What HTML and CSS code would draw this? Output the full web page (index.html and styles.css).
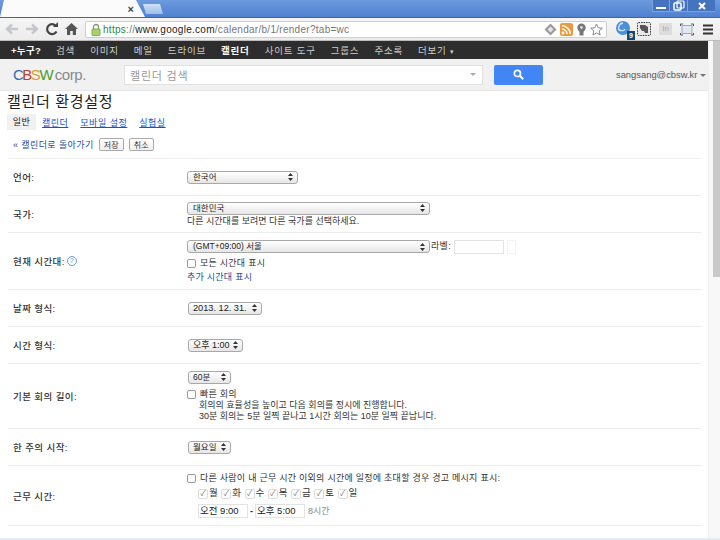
FILE: index.html
```html
<!DOCTYPE html>
<html lang="ko">
<head>
    <meta charset="utf-8">
    <title>캘린더 환경설정</title>
    <link rel="stylesheet" href="styles.css">
</head>
<body>
    <!-- Browser tabs -->
    <div class="tabstrip">
        <div class="tab"><span class="tab-close">×</span></div>
        <div class="new-tab"></div>
        <div class="win-controls">
            <span class="win-btn win-min"><svg width="14" height="10" viewBox="0 0 14 10"><path d="M2 7h10" stroke="#fff" stroke-width="2"/></svg></span>
            <span class="win-btn win-max"><svg width="14" height="11" viewBox="0 0 14 11"><rect x="2" y="3" width="7" height="7" rx="1" fill="none" stroke="#fff" stroke-width="1.5"/><rect x="5" y="1" width="7" height="7" rx="1" fill="none" stroke="#fff" stroke-width="1.2"/></svg></span>
            <span class="win-btn win-close"><svg width="14" height="10" viewBox="0 0 14 10"><path d="M4 2l6 6M10 2l-6 6" stroke="#fff" stroke-width="2"/></svg></span>
        </div>
    </div>

    <!-- Browser toolbar -->
    <div class="toolbar">
        <svg class="tool" width="14" height="14" viewBox="0 0 14 14"><path d="M13 7H3M7 2.5L2 7l5 4.5" fill="none" stroke="#c4c8cc" stroke-width="2.4"/></svg>
        <svg class="tool" width="14" height="14" viewBox="0 0 14 14"><path d="M1 7h10M7 2.5L12 7l-5 4.5" fill="none" stroke="#c4c8cc" stroke-width="2.4"/></svg>
        <svg class="tool" width="14" height="14" viewBox="0 0 14 14"><path d="M11.5 9.5A5 5 0 1 1 11 4" fill="none" stroke="#444" stroke-width="2.2"/><path d="M8 5h5V0z" fill="#444"/></svg>
        <svg class="tool" width="13" height="14" viewBox="0 0 13 14"><path d="M6.5 1L0 7h2v6h3.2V9h2.6v4H11V7h2z" fill="#555"/></svg>
        <div class="omnibox">
            <svg class="lock" width="10" height="13" viewBox="0 0 10 13"><path d="M2.5 6V4a2.5 2.5 0 0 1 5 0v2" fill="none" stroke="#8a9a70" stroke-width="1.3"/><rect x="1" y="6" width="8" height="6.5" rx="1" fill="#a4d46a" stroke="#6f9c3c" stroke-width=".8"/></svg>
            <span class="url"><span class="url-https">https</span><span class="url-dim">://</span><span class="url-host">www.google.com</span><span class="url-dim">/calendar/b/1/render?tab=wc</span></span>
            <span class="omni-icons">
                <svg width="13" height="13" viewBox="0 0 13 13"><path d="M6.5 0.5l6 6-6 6-6-6z" fill="#9a9a9a"/><path d="M6.5 3.5l3 3-3 3-3-3z" fill="#e4e4e4"/></svg>
                <svg width="13" height="13" viewBox="0 0 13 13"><rect width="13" height="13" rx="2" fill="#ee9a3c"/><circle cx="3" cy="10" r="1.4" fill="#fff"/><path d="M2 6a5 5 0 0 1 5 5M2 2.8A8.2 8.2 0 0 1 10.2 11" fill="none" stroke="#fff" stroke-width="1.5"/></svg>
                <svg width="11" height="13" viewBox="0 0 11 13"><circle cx="5.5" cy="4.8" r="4.2" fill="#777"/><rect x="3.5" y="8" width="4" height="4.5" fill="#777"/><circle cx="5.5" cy="4.5" r="1.4" fill="#ddd"/></svg>
                <svg width="13" height="13" viewBox="0 0 13 13"><path d="M6.5 1l1.7 3.8 4.1.4-3.1 2.7.9 4.1-3.6-2.1-3.6 2.1.9-4.1L.7 5.2l4.1-.4z" fill="#fff" stroke="#888"/></svg>
            </span>
        </div>
        <div class="extensions">
            <span class="ext-globe"><svg width="18" height="18" viewBox="0 0 18 18"><circle cx="8" cy="8" r="7" fill="#4d8fd6"/><path d="M8 3a5 5 0 0 0-4 7c2 1 5 1 6-1" fill="none" stroke="#d5e7f7" stroke-width="1.4"/></svg><span class="ext-badge">9</span></span>
            <svg width="14" height="14" viewBox="0 0 14 14"><rect x=".5" y=".5" width="13" height="13" rx="1" fill="#e8e8e8" stroke="#333" stroke-dasharray="1.5 1"/><path d="M3 3h5l3 2v6H8l-1-2H5L3 6z" fill="#555"/></svg>
            <span class="ext-in">In</span>
            <svg width="14" height="13" viewBox="0 0 14 13"><rect x="2" y="2.5" width="10" height="8" fill="#dfe9f4" stroke="#8a9cae" stroke-width=".8"/><path d="M.5 3V1h2.5M11 1h2.5v2M.5 10v2h2.5M11 12h2.5v-2" fill="none" stroke="#556"/></svg>
            <svg class="ext-menu" width="10" height="11" viewBox="0 0 10 11"><path d="M0 1.5h10M0 5.5h10M0 9.5h10" stroke="#333" stroke-width="2"/></svg>
        </div>
    </div>

    <div class="viewport">
        <div class="page">
            <!-- Google bar -->
            <nav class="gbar">
                <a class="gbar-plus">+누구?</a>
                <a>검색</a>
                <a>이미지</a>
                <a>메일</a>
                <a>드라이브</a>
                <a class="gbar-on">캘린더</a>
                <a>사이트 도구</a>
                <a>그룹스</a>
                <a>주소록</a>
                <a>더보기 <span class="gbar-caret">▾</span></a>
            </nav>

            <header class="masthead">
                <div class="logo"><span class="l-b">C</span><span class="l-b2">B</span><span class="l-o">S</span><span class="l-g">W</span> <span class="l-corp">corp.</span></div>
                <div class="search-box">
                    <span>캘린더 검색</span>
                    <span class="search-caret"></span>
                </div>
                <div class="search-btn">
                    <svg width="11" height="11" viewBox="0 0 11 11"><circle cx="4.4" cy="4.4" r="3.1" fill="none" stroke="#fff" stroke-width="1.7"/><path d="M6.8 6.8L10.2 10.2" stroke="#fff" stroke-width="2"/></svg>
                </div>
                <div class="account">sangsang@cbsw.kr <span class="account-caret"></span></div>
            </header>

            <h1 class="title">캘린더 환경설정</h1>

            <div class="tabs">
                <span class="tabs-on">일반</span>
                <a>캘린더</a>
                <a>모바일 설정</a>
                <a>실험실</a>
            </div>

            <div class="actions">
                <a class="back">« 캘린더로 돌아가기</a>
                <button class="btn">저장</button>
                <button class="btn">취소</button>
            </div>

            <!-- Settings rows -->
            <div class="row row-37">
                <div class="row-label">언어:</div>
                <div class="row-field">
                    <div class="select sel-lang"><span>한국어</span><svg class="updown" width="5" height="8" viewBox="0 0 5 8"><path d="M2.5 0L5 3H0zM2.5 8L0 5h5z"/></svg></div>
                </div>
            </div>

            <div class="row row-37">
                <div class="row-label">국가:</div>
                <div class="row-field">
                    <div class="select sel-wide"><span>대한민국</span><svg class="updown" width="5" height="8" viewBox="0 0 5 8"><path d="M2.5 0L5 3H0zM2.5 8L0 5h5z"/></svg></div>
                    <div class="note">다른 시간대를 보려면 다른 국가를 선택하세요.</div>
                </div>
            </div>

            <div class="row row-tz">
                <div class="row-label">현재 시간대:<span class="help">?</span></div>
                <div class="row-field">
                    <div class="tz-line">
                        <div class="select sel-wide"><span>(GMT+09:00) 서울</span><svg class="updown" width="5" height="8" viewBox="0 0 5 8"><path d="M2.5 0L5 3H0zM2.5 8L0 5h5z"/></svg></div>
                        <span class="tz-label">라벨:</span>
                        <span class="text-input tz-input"></span>
                        <span class="tz-stub"></span>
                    </div>
                    <label class="check check-tz"><span class="box"></span>모든 시간대 표시</label>
                    <a class="plain-link">추가 시간대 표시</a>
                </div>
            </div>

            <div class="row row-37">
                <div class="row-label">날짜 형식:</div>
                <div class="row-field">
                    <div class="select sel-date"><span>2013. 12. 31.</span><svg class="updown" width="5" height="8" viewBox="0 0 5 8"><path d="M2.5 0L5 3H0zM2.5 8L0 5h5z"/></svg></div>
                </div>
            </div>

            <div class="row row-37">
                <div class="row-label">시간 형식:</div>
                <div class="row-field">
                    <div class="select sel-time"><span>오후 1:00</span><svg class="updown" width="5" height="8" viewBox="0 0 5 8"><path d="M2.5 0L5 3H0zM2.5 8L0 5h5z"/></svg></div>
                </div>
            </div>

            <div class="row row-meet">
                <div class="row-label">기본 회의 길이:</div>
                <div class="row-field">
                    <div class="select sel-short"><span>60분</span><svg class="updown" width="5" height="8" viewBox="0 0 5 8"><path d="M2.5 0L5 3H0zM2.5 8L0 5h5z"/></svg></div>
                    <label class="check check-meet"><span class="box"></span>빠른 회의</label>
                    <div class="indent">회의의 효율성을 높이고 다음 회의를 정시에 진행합니다.</div>
                    <div class="indent">30분 회의는 5분 일찍 끝나고 1시간 회의는 10분 일찍 끝납니다.</div>
                </div>
            </div>

            <div class="row row-37">
                <div class="row-label">한 주의 시작:</div>
                <div class="row-field">
                    <div class="select sel-short"><span>월요일</span><svg class="updown" width="5" height="8" viewBox="0 0 5 8"><path d="M2.5 0L5 3H0zM2.5 8L0 5h5z"/></svg></div>
                </div>
            </div>

            <div class="row row-work">
                <div class="row-label">근무 시간:</div>
                <div class="row-field">
                    <label class="check"><span class="box"></span>다른 사람이 내 근무 시간 이외의 시간에 일정에 초대할 경우 경고 메시지 표시:</label>
                    <div class="days">
                        <span class="day">월</span><span class="day">화</span><span class="day">수</span><span class="day">목</span><span class="day">금</span><span class="day">토</span><span class="day">일</span>
                    </div>
                    <div class="hours">
                        <span class="text-input hour">오전 9:00</span>
                        <span class="hour-dash">-</span>
                        <span class="text-input hour">오후 5:00</span>
                        <span class="hour-total">8시간</span>
                    </div>
                </div>
            </div>
        </div>
        <div class="scrollbar"><div class="thumb"></div></div>
    </div>
    <div class="window-edge"></div>
</body>
</html>
```

FILE: styles.css
```css
/* General */
html, body {
    height: 540px;
    overflow: hidden;
}

body {
    margin: 0;
    background: #fff;
    color: #333;
    font-family: "Liberation Sans", "Noto Sans CJK KR", sans-serif;
    font-size: 9px;
}

a {
    cursor: pointer;
}

/* Browser tabs */
.tabstrip {
    display: flex;
    height: 17px;
    background: linear-gradient(#6d9ade, #4f81cf);
}

.tab {
    width: 145px;
    height: 17px;
    background: #fbfbfb;
    clip-path: polygon(0 100%, 4px 0, 136px 0, 145px 100%);
    display: flex;
    justify-content: flex-end;
    align-items: center;
    padding-right: 11px;
    box-sizing: border-box;
}

.tab-close {
    font-size: 11px;
    font-weight: bold;
    color: #444;
}

.new-tab {
    width: 20px;
    height: 10px;
    margin: 4px 0 0 -2px;
    background: linear-gradient(#cfe0f5, #9dbfe8);
    clip-path: polygon(0 0, 17px 0, 20px 100%, 3px 100%);
}

.win-controls {
    display: flex;
    margin-left: auto;
    margin-right: 5px;
    height: 12px;
}

.win-btn {
    display: flex;
    justify-content: center;
    align-items: center;
    background: #4673bd;
    border-left: 1px solid #7ea3db;
    border-bottom: 1px solid #7ea3db;
    height: 11px;
}

.win-min { width: 16px; }
.win-max { width: 17px; }
.win-close { width: 27px; }

/* Browser toolbar */
.toolbar {
    display: flex;
    align-items: center;
    height: 24px;
    padding-left: 5px;
    background: linear-gradient(#f5f5f5, #ececec);
    border-top: 1px solid #3a66ad;
    box-sizing: border-box;
    border-bottom: 1px solid #bbb;
}

.tool {
    margin-right: 6px;
    flex: none;
}

.omnibox {
    display: flex;
    align-items: center;
    width: 522px;
    height: 17px;
    margin-left: 1px;
    padding-left: 5px;
    box-sizing: border-box;
    background: #fff;
    border: 1px solid #cfcfcf;
    border-radius: 2px;
}

.url {
    margin-left: 2px;
    font-size: 10px;
    letter-spacing: 0.28px;
    color: #777;
    white-space: nowrap;
}

.url-https { color: #2a8a2e; }
.url-host { color: #222; }

.omni-icons {
    display: flex;
    align-items: center;
    gap: 3px;
    margin-left: auto;
    margin-right: 3px;
}

.extensions {
    display: flex;
    align-items: center;
    gap: 8px;
    margin-left: 8px;
}

.ext-globe {
    position: relative;
    width: 18px;
    height: 18px;
    margin-right: -4px;
}

.ext-badge {
    position: absolute;
    right: -2px;
    bottom: -2px;
    width: 8px;
    height: 9px;
    background: #124a70;
    color: #fff;
    font-size: 7px;
    font-weight: bold;
    line-height: 9px;
    text-align: center;
}

.ext-in {
    width: 13px;
    height: 12px;
    background: #ddd;
    color: #aaa;
    font-size: 8px;
    line-height: 12px;
    text-align: center;
}

.ext-menu {
    margin-left: 1px;
}

/* Page area */
.viewport {
    display: flex;
}

.page {
    width: 708px;
}

.scrollbar {
    width: 12px;
    height: 497px;
    background: #f8f8f8;
    border-left: 1px solid #eee;
    box-sizing: border-box;
    padding-left: 4px;
}

.thumb {
    width: 7px;
    height: 236px;
    background: #c9c9c9;
}

.window-edge {
    height: 2px;
    background: #e6ecf3;
}

/* Google bar */
.gbar {
    display: flex;
    align-items: center;
    gap: 15px;
    height: 18px;
    padding-left: 11px;
    background: #2d2d2d;
    color: #ccc;
    font-size: 9.5px;
    letter-spacing: 0.8px;
    white-space: nowrap;
}

.gbar-plus,
.gbar-on {
    color: #fff;
    font-weight: bold;
}

.gbar-plus {
    letter-spacing: 0.3px;
}

.gbar-caret {
    font-size: 7px;
}

/* Header with search */
.masthead {
    display: flex;
    align-items: center;
    height: 32px;
    background: #f1f1f1;
    border-bottom: 1px solid #e5e5e5;
    box-sizing: border-box;
}

.logo {
    width: 124px;
    flex: none;
    padding-left: 13px;
    box-sizing: border-box;
    font-size: 15px;
    letter-spacing: -1.5px;
    white-space: nowrap;
}

.l-b { color: #2f6db3; }
.l-b2 { color: #b8412f; }
.l-o { color: #dd9a2a; }
.l-g { color: #4c9a2a; }
.l-corp { color: #8a8a8a; letter-spacing: -0.4px; }

.search-box {
    display: flex;
    align-items: center;
    justify-content: space-between;
    width: 359px;
    height: 20px;
    padding: 0 6px 0 5px;
    box-sizing: border-box;
    background: #fff;
    border: 1px solid #e0e0e0;
    color: #999;
    font-size: 11px;
    letter-spacing: 0.8px;
}

.search-caret,
.account-caret {
    width: 0;
    height: 0;
    border-left: 3px solid transparent;
    border-right: 3px solid transparent;
    border-top: 3px solid #aaa;
}

.account-caret {
    display: inline-block;
    vertical-align: middle;
    border-top-color: #777;
}

.search-btn {
    display: flex;
    justify-content: center;
    align-items: center;
    width: 49px;
    height: 20px;
    margin-left: 11px;
    background: #4285f4;
    border-radius: 2px;
}

.account {
    margin-left: auto;
    padding-right: 2px;
    color: #555;
    font-size: 9.4px;
    white-space: nowrap;
}

/* Title and tabs */
.title {
    margin: 0;
    padding: 1px 0 0 7px;
    height: 23px;
    box-sizing: border-box;
    color: #222;
    font-size: 15px;
    font-weight: normal;
    letter-spacing: 0.7px;
    line-height: 19px;
}

.tabs {
    display: flex;
    align-items: center;
    gap: 12px;
    height: 16px;
    padding-left: 7px;
    font-size: 9px;
    letter-spacing: 0.5px;
}

.tabs a {
    color: #15c;
    text-decoration: underline;
}

.tabs-on {
    width: 29px;
    height: 16px;
    margin-right: -6px;
    background: #f1f1f1;
    color: #222;
    line-height: 16px;
    text-align: center;
}

.actions {
    display: flex;
    align-items: center;
    height: 29px;
    margin: 0 6px 0 8px;
    padding-left: 5px;
    border-bottom: 1px solid #f0f0f0;
    box-sizing: border-box;
}

.back {
    color: #1a4d99;
    margin-right: 5px;
    letter-spacing: 0.4px;
}

.btn {
    width: 25px;
    height: 13px;
    margin-right: 5px;
    padding: 0;
    background: linear-gradient(#fff, #f0f0f0);
    border: 1px solid #aaa;
    border-radius: 2px;
    color: #333;
    font-family: inherit;
    font-size: 8px;
}

/* Settings rows */
.row {
    display: flex;
    align-items: center;
    margin: 0 6px 0 8px;
    border-bottom: 1px solid #ececec;
    box-sizing: border-box;
}

.row-37 { height: 37px; }
.row-tz { height: 57px; }
.row-meet { height: 65px; }
.row-work { height: 60px; }

.row-label {
    width: 179px;
    flex: none;
    padding-left: 5px;
    box-sizing: border-box;
    font-size: 9.5px;
    font-weight: 500;
    letter-spacing: 0.4px;
}

.row-field {
    line-height: 11px;
    white-space: nowrap;
}

.help {
    display: inline-block;
    width: 8px;
    height: 8px;
    margin-left: 2px;
    border: 1px solid #6a9bd8;
    border-radius: 50%;
    color: #6a9bd8;
    font-size: 7px;
    font-weight: normal;
    line-height: 8px;
    letter-spacing: 0;
    text-align: center;
    vertical-align: 2px;
}

.select {
    display: flex;
    align-items: center;
    justify-content: space-between;
    height: 13px;
    padding: 0 4px 0 5px;
    box-sizing: border-box;
    background: linear-gradient(#fff, #e6e6e6);
    border: 1px solid #a8a8a8;
    border-radius: 3px;
    font-size: 8.5px;
    color: #222;
}

.updown { fill: #333; }

.sel-lang { width: 111px; }
.sel-wide { width: 243px; }
.sel-date { width: 74px; margin-left: 1px; padding-left: 4px; font-size: 9.2px; }
.sel-time { width: 55px; margin-left: 1px; padding-left: 4px; font-size: 9px; }
.sel-short { width: 43px; margin-left: 1px; padding-left: 4px; }

.note {
    margin-top: 1px;
    font-size: 9px;
}

.tz-line {
    display: flex;
    align-items: center;
}

.tz-label {
    margin: 0 3px 0 1px;
    letter-spacing: 0.3px;
}

.text-input {
    box-sizing: border-box;
    display: inline-block;
    height: 14px;
    background: #fff;
    border: 1px solid #e3e3e3;
}

.tz-input { width: 50px; }

.tz-stub {
    width: 9px;
    height: 14px;
    margin-left: 3px;
    border: 1px solid #f3f3f3;
    box-sizing: border-box;
}

.check {
    display: flex;
    align-items: center;
    font-size: 9px;
    letter-spacing: 0.25px;
}

.box {
    width: 7px;
    height: 7px;
    margin-right: 4px;
    background: #fff;
    border: 1px solid #999;
    border-radius: 2px;
}

.check-tz { margin-top: 4px; }
.check-meet { margin-top: 5px; }

.plain-link {
    display: block;
    margin-top: 3px;
    color: #1a4d99;
    letter-spacing: 0.25px;
}

.indent {
    padding-left: 12px;
}

.days {
    display: flex;
    gap: 3.5px;
    margin-top: 3px;
    padding-left: 11px;
    font-size: 9.5px;
}

.day::before {
    content: "✓";
    display: inline-block;
    width: 8px;
    height: 8px;
    margin-right: 1px;
    border: 1px solid #ddd;
    border-radius: 2px;
    color: #777;
    font-size: 8px;
    line-height: 8px;
    text-align: center;
}

.hours {
    display: flex;
    align-items: center;
    margin-top: 5px;
    padding-left: 11px;
}

.hour {
    width: 50px;
    padding-left: 1px;
    color: #222;
    font-size: 9.5px;
    line-height: 12px;
}

.hour-dash {
    margin: 0 2px;
    font-weight: bold;
}

.hour-total {
    margin-left: 3px;
    color: #888;
}
```
